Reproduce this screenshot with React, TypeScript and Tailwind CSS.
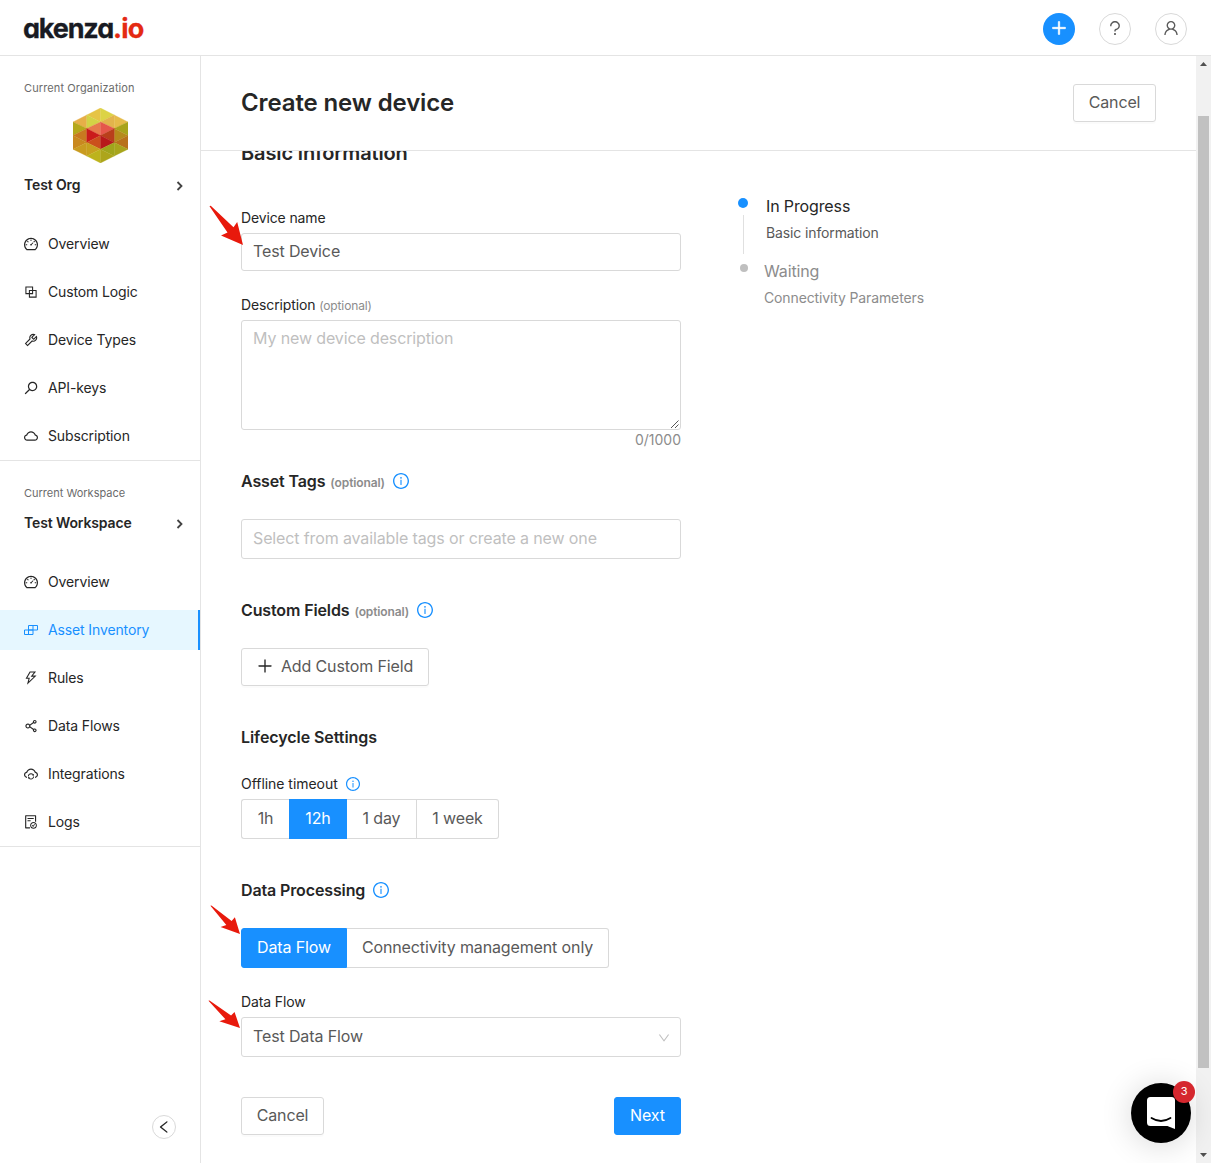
import { ReactNode } from "react";
import {
  AiOutlineDashboard, AiOutlineBlock, AiOutlineTool, AiOutlineSearch, AiOutlineCloud,
  AiOutlineThunderbolt, AiOutlineShareAlt, AiOutlineCloudSync, AiOutlineFileDone,
  AiOutlineInfoCircle, AiOutlinePlus, AiOutlineQuestion, AiOutlineUser, AiOutlineLeft, AiOutlineDown,
} from "react-icons/ai";

const box = "64 64 896 896";

function InventoryIcon() {
  return (
    <svg width="14" height="14" viewBox="0 0 14 14" fill="none" stroke="currentColor" strokeWidth="1">
      <path d="M4.500 2.500h9v4.500h-9zM.5 7h8.500v4.500H.5zM4.500 7v4.500M9 2.500v4.500" />
    </svg>
  );
}

function NavItem({ icon, label, active }: { icon: ReactNode; label: string; active?: boolean }) {
  return (
    <a className={`mb-2 flex h-10 items-center gap-[10px] pl-6 text-sm ${active ? "border-r-2 border-[#1890ff] bg-[#e6f7ff] text-[#1890ff]" : "text-[#262626]"}`}>
      <span className="flex w-[14px] justify-center text-[14px]">{icon}</span>
      <span>{label}</span>
    </a>
  );
}

function Chevron() {
  return (
    <svg width="8" height="10" viewBox="0 0 8 10" fill="none" stroke="#434343" strokeWidth="1.8">
      <path d="M1.500 1l4 4-4 4" />
    </svg>
  );
}

const facets: [string, string][] = [
  ["27.5,0 13.75,7 27.5,14", "#e6c445"],
  ["27.5,0 41.25,7 27.5,14", "#dcd345"],
  ["13.75,7 0,14 13.75,20.5", "#e6af48"],
  ["13.75,7 27.5,14 13.75,20.5", "#d3d346"],
  ["41.25,7 27.5,14 41.25,20.5", "#e2b44c"],
  ["41.25,7 55,14 41.25,20.5", "#e5bb49"],
  ["0,14 13.75,20.5 0,27.5", "#b5a81b"],
  ["13.75,20.5 13.75,34.5 0,27.5", "#c87820"],
  ["0,27.5 13.75,34.5 0,41.25", "#c9881f"],
  ["0,41.25 13.75,34.5 13.75,48", "#c99b20"],
  ["55,14 41.25,20.5 55,27.5", "#a8a31b"],
  ["41.25,20.5 55,27.5 41.25,34.5", "#b68a1b"],
  ["55,27.5 41.25,34.5 55,41.25", "#b8721b"],
  ["55,41.25 41.25,34.5 41.25,48", "#a8a51c"],
  ["27.5,14 13.75,20.5 27.5,27.5", "#e67a4b"],
  ["27.5,14 41.25,20.5 27.5,27.5", "#e5574b"],
  ["13.75,20.5 27.5,27.5 13.75,34.5", "#ca1b1b"],
  ["27.5,27.5 13.75,34.5 27.5,41.25", "#cb501c"],
  ["41.25,20.5 41.25,34.5 27.5,27.5", "#b93f1b"],
  ["27.5,27.5 41.25,34.5 27.5,41.25", "#b7191b"],
  ["13.75,34.5 27.5,41.25 13.75,48", "#c8a01f"],
  ["27.5,41.25 13.75,48 27.5,55", "#bdb31c"],
  ["41.25,34.5 27.5,41.25 41.25,48", "#a0a51c"],
  ["27.5,41.25 41.25,48 27.5,55", "#ada51b"],
];

function OrgLogo() {
  return (
    <svg width="55" height="55" viewBox="0 0 55 55">
      {facets.map(([p, c]) => <polygon key={p} points={p} fill={c} stroke={c} strokeWidth="0.3" />)}
    </svg>
  );
}

function Sidebar() {
  return (
    <aside className="flex w-[201px] shrink-0 flex-col border-r border-[#e4e4e4]">
      <div className="h-[405px] border-b border-[#e4e4e4]">
        <div className="px-6 pt-6">
          <div className="h-4 text-[11px] leading-4 tracking-[0.01em] text-[#6b6b6b]">Current Organization</div>
          <div className="mt-3 flex h-[55px] justify-center"><OrgLogo /></div>
          <div className="mt-[11px] flex h-[22px] items-center justify-between text-sm font-semibold text-[#262626]">
            Test Org
            <span className="-mr-2 pt-[2px]"><Chevron /></span>
          </div>
        </div>
        <nav className="mt-7">
          <NavItem icon={<AiOutlineDashboard viewBox={box} />} label="Overview" />
          <NavItem icon={<AiOutlineBlock viewBox={box} />} label="Custom Logic" />
          <NavItem icon={<AiOutlineTool viewBox={box} />} label="Device Types" />
          <NavItem icon={<AiOutlineSearch viewBox={box} className="-scale-x-100" />} label="API-keys" />
          <NavItem icon={<AiOutlineCloud viewBox={box} />} label="Subscription" />
        </nav>
      </div>
      <div className="h-[386px] border-b border-[#e4e4e4]">
        <div className="px-6 pt-6">
          <div className="h-4 text-[11px] leading-4 tracking-normal text-[#6b6b6b]">Current Workspace</div>
          <div className="mt-[11px] flex h-[22px] items-center justify-between text-sm font-semibold text-[#262626]">
            Test Workspace
            <span className="-mr-2 pt-[2px]"><Chevron /></span>
          </div>
        </div>
        <nav className="mt-7">
          <NavItem icon={<AiOutlineDashboard viewBox={box} />} label="Overview" />
          <NavItem active icon={<InventoryIcon />} label="Asset Inventory" />
          <NavItem icon={<AiOutlineThunderbolt viewBox={box} />} label="Rules" />
          <NavItem icon={<AiOutlineShareAlt viewBox={box} />} label="Data Flows" />
          <NavItem icon={<AiOutlineCloudSync viewBox={box} />} label="Integrations" />
          <NavItem icon={<AiOutlineFileDone viewBox={box} />} label="Logs" />
        </nav>
      </div>
      <button className="mt-auto mr-6 mb-6 flex size-6 items-center justify-center self-end rounded-full border border-[#d9d9d9] pr-px text-[14px] text-[#262626]">
        <AiOutlineLeft viewBox={box} />
      </button>
    </aside>
  );
}

function Arrow({ className, w, h }: { className: string; w: number; h: number }) {
  return (
    <svg className={`absolute ${className}`} width={w} height={h} viewBox="0 0 34 40" preserveAspectRatio="none" fill="#e8190c">
      <path d="M.5 1.200Q1 .2 2 1L24.500 22.200 28.200 17 34 40 12 30.500 18.500 27.500Z" />
    </svg>
  );
}

function Info({ size }: { size: string }) {
  return <AiOutlineInfoCircle viewBox={box} className={`${size} text-[#1890ff]`} />;
}

const btn = "flex items-center justify-center border pb-[2px] text-base";

export default function App() {
  return (
    <div className="flex h-[1163px] w-[1211px] flex-col overflow-hidden bg-white font-['Inter',sans-serif] tracking-[-0.008em] text-[#262626]">
      <header className="flex h-14 shrink-0 items-center justify-between border-b border-[#e4e4e4] pr-6 pl-[23px]">
        <div className="mt-[3px] text-[27px] font-bold tracking-[-1.15px] text-[#191b23] [-webkit-text-stroke:0.3px_currentColor] [font-feature-settings:'cv11']">akenza<span className="tracking-[-0.8px] text-[#e42a12]">.io</span></div>
        <div className="mt-[2px] flex gap-6">
          <span className="flex size-8 items-center justify-center rounded-full bg-[#1890ff] pb-[2px] text-[16px] text-white"><AiOutlinePlus viewBox={box} strokeWidth="40" /></span>
          <span className="flex size-8 items-center justify-center rounded-full border border-[#d9d9d9] pb-[2px] text-[16px] text-[#595959]"><AiOutlineQuestion viewBox={box} /></span>
          <span className="flex size-8 items-center justify-center rounded-full border border-[#d9d9d9] pb-[2px] text-[16px] text-[#595959]"><AiOutlineUser viewBox={box} /></span>
        </div>
      </header>
      <div className="flex min-h-0 flex-1">
        <Sidebar />
        <main className="flex min-w-0 flex-1 flex-col">
          <div className="flex h-[95px] shrink-0 items-center justify-between border-b border-[#e4e4e4] pr-10 pl-10">
            <h1 className="text-2xl font-semibold">Create new device</h1>
            <button className={`${btn} h-[38px] w-[83px] rounded-[3px] border-[#d9d9d9] text-[#595959] shadow-[0_2px_0_rgba(0,0,0,0.016)]`}>Cancel</button>
          </div>
          <div className="flex min-h-0 flex-1 overflow-hidden pl-10">
            <div className="relative w-[440px] shrink-0">
              <h2 className="-mt-3 h-7 text-xl leading-7 font-semibold">Basic information</h2>
              <Arrow className="top-[54px] -left-8" w={34} h={40} />
              <div className="mt-10 h-[22px] text-sm leading-[22px]">Device name</div>
              <div className="mt-[4px] flex h-[38px] items-center rounded-[3px] border border-[#d9d9d9] px-[11px] pb-[2px] text-base text-[#595959]">Test Device</div>
              <div className="mt-[23px] h-[22px] text-sm leading-[22px]">Description <span className="text-xs text-[#8c8c8c]">(optional)</span></div>
              <div className="relative mt-[4px] h-[110px] rounded-[3px] border border-[#d9d9d9] px-[11px] pt-[5px] text-base text-[#bfbfbf]">
                My new device description
                <svg className="absolute right-px bottom-px" width="8" height="8" stroke="#555" strokeWidth="1"><path d="M0 8L7.500.5M4 8L7.500 4.500" /></svg>
              </div>
              <div className="h-5 text-right text-sm leading-5 tracking-normal text-[#8c8c8c]">0/1000</div>
              <div className="mt-[19px] flex h-6 items-center text-base font-semibold">Asset Tags<span className="mt-[3px] mr-2 ml-[5px] text-xs text-[#8c8c8c]">(optional)</span><Info size="size-4" /></div>
              <div className="mt-[26px] flex h-10 items-center rounded-[3px] border border-[#d9d9d9] px-[11px] pb-[2px] text-base text-[#bfbfbf]">Select from available tags or create a new one</div>
              <div className="mt-[39px] flex h-6 items-center text-base font-semibold">Custom Fields<span className="mt-[3px] mr-2 ml-[5px] text-xs text-[#8c8c8c]">(optional)</span><Info size="size-4" /></div>
              <button className={`${btn} mt-[26px] h-[38px] w-[188px] gap-2 rounded-[3px] border-[#d9d9d9] text-[#595959] shadow-[0_2px_0_rgba(0,0,0,0.016)]`}><AiOutlinePlus viewBox={box} className="text-[#262626]" />Add Custom Field</button>
              <div className="mt-[39px] h-6 text-base leading-6 font-semibold tracking-[-0.004em]">Lifecycle Settings</div>
              <div className="mt-6 flex h-[22px] items-center gap-2 text-sm tracking-[-0.003em]">Offline timeout<Info size="size-[14px]" /></div>
              <div className="mt-[4px] flex h-10 text-[#595959]">
                <span className={`${btn} w-[48px] rounded-l-[3px] border-r-0 border-[#d9d9d9]`}>1h</span>
                <span className={`${btn} w-[58px] border-[#1890ff] bg-[#1890ff] text-white`}>12h</span>
                <span className={`${btn} w-[70px] border-l-0 border-[#d9d9d9]`}>1 day</span>
                <span className={`${btn} w-[82px] rounded-r-[3px] border-l-0 border-[#d9d9d9]`}>1 week</span>
              </div>
              <div className="relative mt-[39px] flex h-6 items-center gap-2 text-base font-semibold">Data Processing<Info size="size-4" /><Arrow className="top-[27px] -left-[31px]" w={30} h={29} /></div>
              <div className="mt-[26px] flex h-10 text-[#595959]">
                <span className={`${btn} w-[106px] rounded-l-[3px] border-[#1890ff] bg-[#1890ff] text-white`}>Data Flow</span>
                <span className={`${btn} w-[262px] rounded-r-[3px] border-l-0 border-[#d9d9d9]`}>Connectivity management only</span>
              </div>
              <div className="relative mt-[23px] h-[22px] text-sm leading-[22px]">Data Flow<Arrow className="top-[9px] -left-[33px]" w={32} h={28} /></div>
              <div className="mt-[4px] flex h-10 items-center justify-between rounded-[3px] border border-[#d9d9d9] px-[11px] pb-[2px] text-base text-[#595959]">Test Data Flow<AiOutlineDown viewBox={box} className="mt-1 -mr-px size-3 text-[#bfbfbf]" /></div>
              <div className="mt-10 flex justify-between">
                <button className={`${btn} h-[38px] w-[83px] rounded-[3px] border-[#d9d9d9] text-[#595959] shadow-[0_2px_0_rgba(0,0,0,0.016)]`}>Cancel</button>
                <button className={`${btn} h-[38px] w-[67px] rounded-[3px] border-[#1890ff] bg-[#1890ff] text-white`}>Next</button>
              </div>
            </div>
            <div className="ml-[57px] pt-[43px]">
              <div className="flex h-[65px] gap-[18px]">
                <div className="flex w-[10px] flex-col items-center pt-1">
                  <span className="size-[10px] rounded-full bg-[#1890ff]" />
                  <span className="mt-[7px] h-[39px] w-px bg-[#e0e0e0]" />
                </div>
                <div><div className="h-6 text-base leading-6">In Progress</div><div className="mt-1 text-sm leading-[22px] text-[#595959]">Basic information</div></div>
              </div>
              <div className="flex gap-4 pl-[2px] text-[#8c8c8c]">
                <span className="mt-[5px] size-2 rounded-full bg-[#bfbfbf]" />
                <div><div className="h-6 text-base leading-6">Waiting</div><div className="mt-1 text-sm leading-[22px]">Connectivity Parameters</div></div>
              </div>
            </div>
          </div>
        </main>
        <div className="relative flex w-[15px] shrink-0 flex-col items-center justify-between bg-[#f1f1f1]">
          <svg className="mt-[6px]" width="7" height="4"><path d="M0 4L3.500 0 7 4z" fill="#505050" /></svg>
          <div className="mt-[50px] mb-auto h-[952px] w-[11px] bg-[#c1c1c1]" />
          <svg className="mb-[6px]" width="7" height="4"><path d="M0 0L3.500 4 7 0z" fill="#505050" /></svg>
          <div className="absolute right-5 bottom-5 flex size-[60px] items-center justify-center rounded-full bg-black shadow-[0_2px_32px_rgba(0,0,0,0.16)]">
            <svg width="28" height="32" viewBox="0 0 28 32"><path d="M3.500 0h21a3.500 3.500 0 0 1 3.500 3.500v28.500s-3-1-7.500-3H3.500a3.500 3.500 0 0 1-3.500-3.500V3.500a3.500 3.500 0 0 1 3.500-3.500z" fill="#fff" /><path d="M4.500 21q9.500 6 19 0" stroke="#000" strokeWidth="1.800" fill="none" strokeLinecap="round" /></svg>
            <span className="absolute -top-[2px] -right-1 flex size-[22px] items-center justify-center rounded-full bg-[#d5272e] pb-px text-[11px] text-white">3</span>
          </div>
        </div>
      </div>
    </div>
  );
}
